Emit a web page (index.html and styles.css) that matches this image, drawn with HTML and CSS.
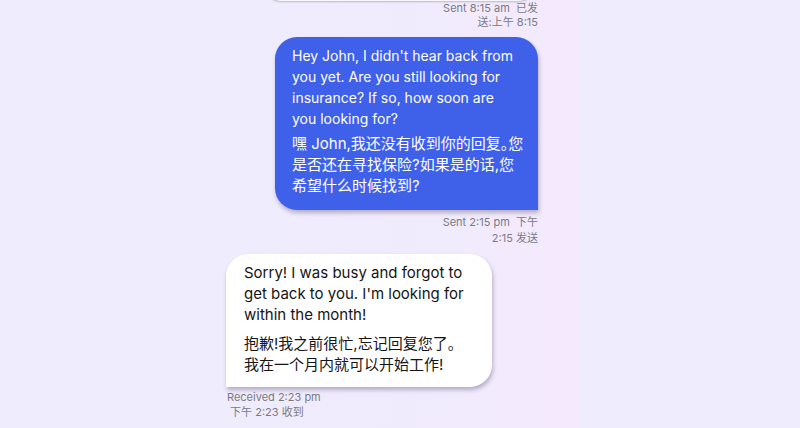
FILE: index.html
```html
<!DOCTYPE html>
<html lang="en">
<head>
<meta charset="utf-8">
<title>Chat</title>
<link rel="stylesheet" href="styles.css">
</head>
<body>
<main class="chat">
  <div class="msg out">
    <div class="bubble ghost"></div>
    <div class="meta">Sent 8:15 am&nbsp; 已发<br>送:上午 8:15</div>
  </div>
  <div class="msg out">
    <div class="bubble blue">
      <p>Hey John, I didn't hear back from you yet. Are you still looking for insurance? If so, how soon are you looking for?</p>
      <p class="zh">嘿 John,我还没有收到你的回复。您<br>是否还在寻找保险?如果是的话,您<br>希望什么时候找到?</p>
    </div>
    <div class="meta meta-mid">Sent 2:15 pm&nbsp; 下午<br>2:15 发送</div>
  </div>
  <div class="msg in">
    <div class="bubble white">
      <p>Sorry! I was busy and forgot to get back to you. I'm looking for within the month!</p>
      <p class="zh">抱歉!我之前很忙,忘记回复您了。<br>我在一个月内就可以开始工作!</p>
    </div>
    <div class="meta meta-in">Received 2:23 pm<br>&nbsp;下午 2:23 收到</div>
  </div>
</main>
</body>
</html>
```
FILE: styles.css
```css
html, body {
  margin: 0;
  padding: 0;
}
body {
  background: #eeecfd;
  font-family: Inter, "Noto Sans CJK SC", sans-serif;
  height: 428px;
  overflow: hidden;
}
.chat {
  width: 360px;
  height: 428px;
  margin: 0 auto;
  background: linear-gradient(to right, #eeecfd 0%, #f1ebfc 70%, #f5e9fc 100%);
  display: flex;
  flex-direction: column;
}
.msg {
  display: flex;
  flex-direction: column;
}
.msg.out {
  align-items: flex-end;
  padding-right: 42px;
}
.msg.in {
  align-items: flex-start;
  padding-left: 6px;
}
.bubble {
  box-sizing: border-box;
  font-size: 14px;
  line-height: 21px;
  box-shadow: 1px 3px 4px rgba(40, 30, 70, 0.3);
}
.bubble p {
  margin: 0;
}
.bubble p + p {
  margin-top: 4px;
}
.bubble .zh {
  font-size: 15px;
  white-space: nowrap;
  font-feature-settings: "halt";
}
.ghost {
  width: 276px;
  height: 20px;
  margin-top: -19px;
  background: #f7f6fd;
  border-radius: 0 0 22px 22px;
  box-shadow: 0 1px 2px rgba(40, 30, 70, 0.25);
}
.blue {
  width: 263px;
  margin-top: 8px;
  padding: 8px 17px 14px 17px;
  background: #3f60e8;
  color: #ffffff;
  border-radius: 22px 22px 0 22px;
}
.white {
  width: 266px;
  margin-top: 8px;
  padding: 8px 18px 12px 18px;
  background: #ffffff;
  color: #151515;
  font-size: 15px;
  border-radius: 22px 22px 22px 0;
}
.white p + p {
  margin-top: 8px;
}
.meta {
  font-size: 11px;
  line-height: 14px;
  color: #7b7a82;
  text-align: right;
  margin-top: 0;
}
.meta-mid {
  margin-top: 4px;
  line-height: 16px;
}
.meta-in {
  text-align: left;
  margin-top: 3px;
  margin-left: 1px;
  line-height: 15px;
}
```
